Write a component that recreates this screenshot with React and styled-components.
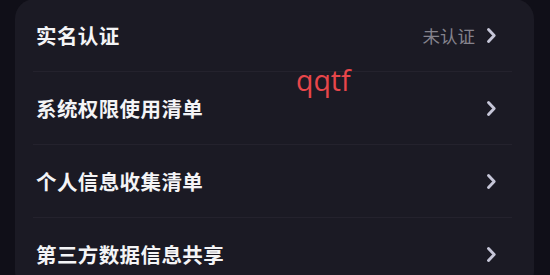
import styled, { createGlobalStyle } from 'styled-components';

const GlobalStyle = createGlobalStyle`
    html, body {
        margin: 0;
        padding: 0;
        background: #100f18;
        overflow: hidden;
    }
`;

const Page = styled.div`
    position: relative;
    width: 550px;
    height: 275px;
    padding: 0 16px 0 15px;
    box-sizing: border-box;
    overflow: hidden;
    font-family: "Noto Sans CJK SC", "Noto Sans", sans-serif;
`;

const Card = styled.div`
    margin-top: -1px;
    background: #1b1a24;
    border-radius: 20px;
    padding: 0 22px 0 18px;
`;

const Row = styled.div`
    display: flex;
    align-items: center;
    justify-content: space-between;
    height: 72px;
    border-bottom: 1px solid ${(props) => (props.$last ? 'transparent' : '#24222d')};
`;

const Label = styled.span`
    padding-left: 3px;
    font-size: 20.5px;
    font-weight: 700;
    color: #f4f4f6;
    letter-spacing: 0.4px;
`;

const Right = styled.div`
    display: flex;
    align-items: center;
    gap: 11px;
    padding-right: 15px;
`;

const Value = styled.span`
    font-size: 17.5px;
    color: #85838d;
`;

const Watermark = styled.div`
    position: absolute;
    left: 296px;
    top: 61px;
    font-family: "Open Sans", sans-serif;
    font-size: 28.5px;
    color: #e8464a;
    pointer-events: none;
`;

const Chevron = () => (
    <svg width="11" height="17" viewBox="0 0 11 17" fill="none">
        <path
            d="M2.5 2.5 L8.2 8.5 L2.5 14.5"
            stroke="#c6c6d8"
            strokeWidth="2.9"
            strokeLinecap="round"
            strokeLinejoin="round"
        />
    </svg>
);

const items = [
    { label: '实名认证', value: '未认证' },
    { label: '系统权限使用清单' },
    { label: '个人信息收集清单' },
    { label: '第三方数据信息共享' },
];

const App = () => (
    <>
        <GlobalStyle />
        <Page>
            <Card>
                {items.map((item, i) => (
                    <Row key={item.label} $last={i === items.length - 1}>
                        <Label>{item.label}</Label>
                        <Right>
                            {item.value && <Value>{item.value}</Value>}
                            <Chevron />
                        </Right>
                    </Row>
                ))}
            </Card>
            <Watermark>qqtf</Watermark>
        </Page>
    </>
);

export default App;
